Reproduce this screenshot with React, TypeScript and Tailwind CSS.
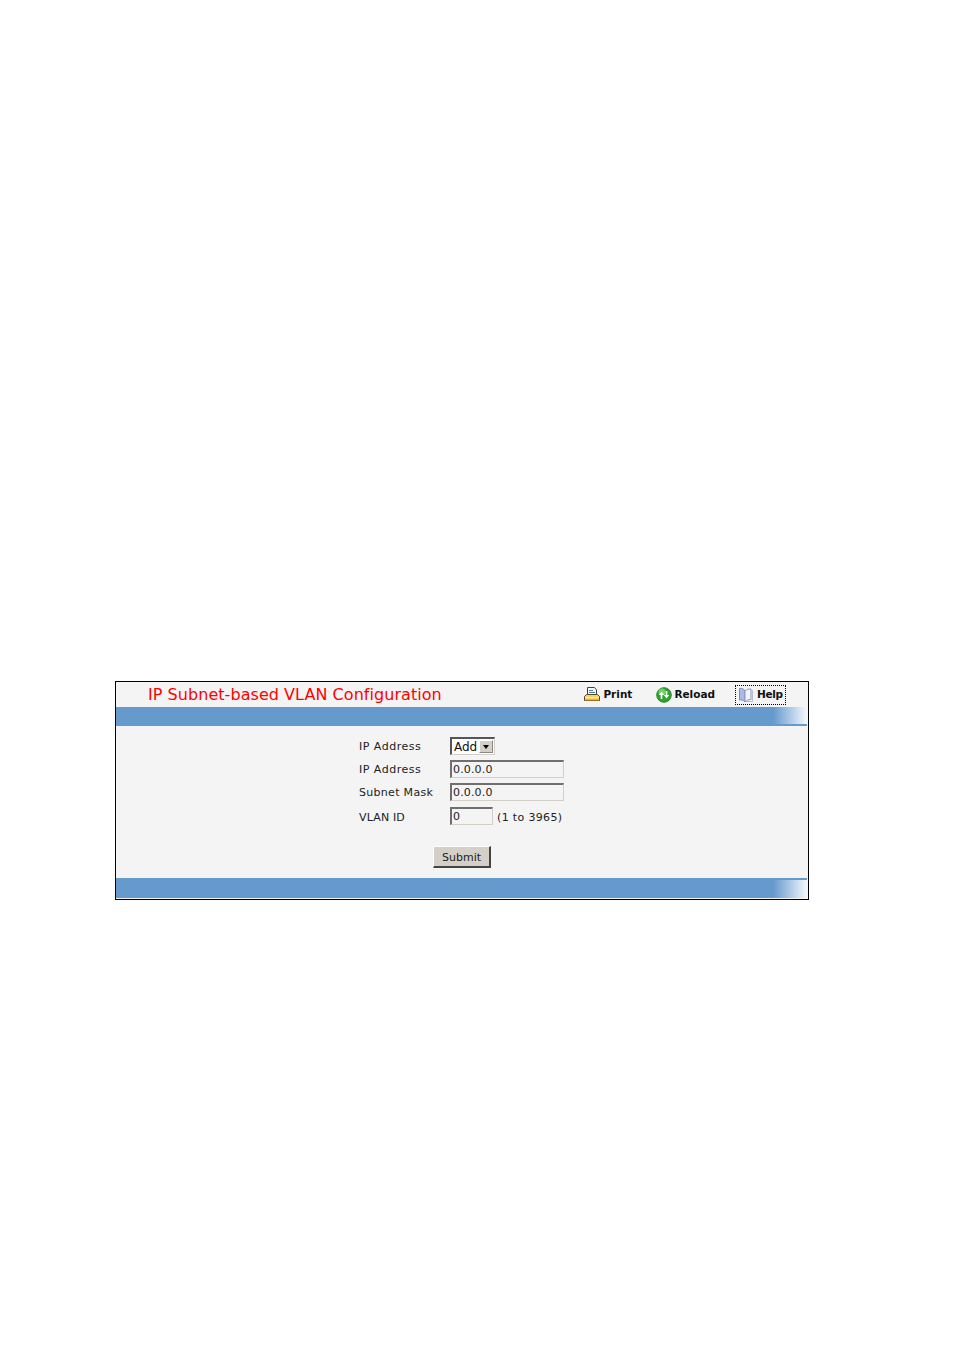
const font = "font-['DejaVu_Sans',sans-serif]";

const PrintIcon = () => (
  <svg width="16" height="16" viewBox="0 0 16 16" className="shrink-0">
    <path d="M3.500.5h7l2 2.500v5h-9z" fill="#f7f9fc" stroke="#3d4048" />
    <path d="M5 3.500h4M5 5.500h6" stroke="#4c7f8a" />
    <path d="M2.500 7.500h11l2 2v4H.5v-4z" fill="#f8d160" stroke="#4a4a3a" />
    <path d="M1 10.500h14" stroke="#fff0a8" />
    <path d="M1 13h14" stroke="#d99a20" />
  </svg>
);

const ReloadIcon = () => (
  <svg width="16" height="16" viewBox="0 0 16 16" className="shrink-0">
    <circle cx="8" cy="8" r="7.300" fill="#2fa32f" stroke="#2a8a35" />
    <circle cx="6" cy="5" r="3.500" fill="#7edb6a" opacity="0.8" />
    <path d="M5.500 12V7.500" fill="none" stroke="#fff" strokeWidth="1.600" />
    <path d="M5.500 4.500 2.800 8h5.400z" fill="#fff" />
    <path d="M10.500 4v4.500" fill="none" stroke="#fff" strokeWidth="1.600" />
    <path d="M10.500 11.500 7.800 8h5.400z" fill="#fff" />
  </svg>
);

const HelpIcon = () => (
  <svg width="16" height="16" viewBox="0 0 16 16" className="shrink-0">
    <path d="M1.500 1.500c2.500-.5 4.500.5 5.500 2.500v11c-1.200-1.600-3-2.400-5.500-2z" fill="#a9bce8" stroke="#7d8fc4" />
    <path d="M7 4c1.300-1.500 3.300-2 6-2v10.500c-2.700 0-4.700.8-6 2.500z" fill="#f3f4fa" stroke="#8a97bf" />
    <path d="M13 3.500h1.500v11H8" fill="none" stroke="#b3bcd6" />
  </svg>
);

const fieldBorder = "border border-t-2 border-l-2 border-t-[#6f6f6f] border-l-[#6f6f6f] border-r-[#d4d0c8] border-b-[#d4d0c8] bg-[#f4f4f4]";
const gradient = "w-[34px] bg-gradient-to-r from-[#6699cc] to-[#f4f8fc]";

export default function App() {
  return (
    <div className={`min-h-[1350px] bg-white pt-[681px] pl-[115px] ${font}`}>
      <div className="w-[694px] h-[219px] border border-black bg-[#f4f4f4]">
        <div className="h-[25px] flex items-center">
          <h1 className="ml-[32px] pt-[1px] text-[16px] leading-[24px] tracking-[0.05px] text-[#ff0000]">IP Subnet-based VLAN Configuration</h1>
          <div className="ml-auto flex items-center text-[10.5px] font-bold text-[#111] mr-[22px]">
            <span className="flex items-center gap-[3px]"><PrintIcon /><span className="pt-[1px]">Print</span></span>
            <span className="flex items-center gap-[2px] ml-[24px]"><ReloadIcon /><span className="pt-[1px]">Reload</span></span>
            <span className="flex items-center gap-[3px] ml-[20px] h-[20px] w-[51px] pl-[2px] border border-dotted border-black"><HelpIcon /><span className="pt-[1px] tracking-[-0.3px]">Help</span></span>
          </div>
        </div>
        <div className="mr-px">
          <div className="h-[17px] bg-[#6699cc] flex justify-end"><div className={gradient} /></div>
          <div className="h-[2px] bg-[#6699cc]" />
        </div>
        <div className="h-[152px] pl-[243px] pt-[11px] text-[11px] text-[#222]">
          <div className="grid grid-cols-[91px_1fr] items-center">
            <label className="h-[23px] leading-[20px] tracking-[0.5px]">IP Address</label>
            <div className="h-[23px]">
              <div className="w-[45px] h-[18px] border border-t-2 border-l-2 border-t-[#555] border-l-[#555] border-[#d4d0c8] bg-white flex items-center justify-between pl-[2px] pr-px text-[12px] text-[#111]">
                Add
                <span className="w-[14px] h-[13px] bg-[#d4d0c8] border border-[#888] border-t-white border-l-white flex items-center justify-center">
                  <span className="border-x-[3px] border-x-transparent border-t-[4px] border-t-black" />
                </span>
              </div>
            </div>
            <label className="h-[23px] leading-[19px] tracking-[0.5px]">IP Address</label>
            <div className="h-[23px]">
              <div className={`w-[114px] h-[18px] ${fieldBorder} leading-[16px] pl-[1px] tracking-[0.15px]`}>0.0.0.0</div>
            </div>
            <label className="h-[24px] leading-[19px] tracking-[0.3px]">Subnet Mask</label>
            <div className="h-[24px]">
              <div className={`w-[114px] h-[18px] ${fieldBorder} leading-[16px] pl-[1px] tracking-[0.15px]`}>0.0.0.0</div>
            </div>
            <label className="h-[24px] leading-[22px] tracking-[0.15px]">VLAN ID</label>
            <div className="h-[24px] flex items-start gap-[4px]">
              <div className={`w-[43px] h-[18px] ${fieldBorder} leading-[16px] pl-[1px]`}>0</div>
              <span className="leading-[22px] tracking-[0.35px]">(1 to 3965)</span>
            </div>
          </div>
          <button className="block ml-[74px] mt-[15px] w-[58px] h-[22px] pt-[1px] bg-[#d4d0c8] border border-t-white border-l-white border-r-[#444] border-b-[#444] border-r-2 border-b-2 text-[11px] text-[#222] leading-none">Submit</button>
        </div>
        <div className="mr-px">
          <div className="h-[2px] bg-[#6699cc]" />
          <div className="h-[18px] bg-[#6699cc] flex justify-end"><div className={gradient} /></div>
        </div>
      </div>
    </div>
  );
}
